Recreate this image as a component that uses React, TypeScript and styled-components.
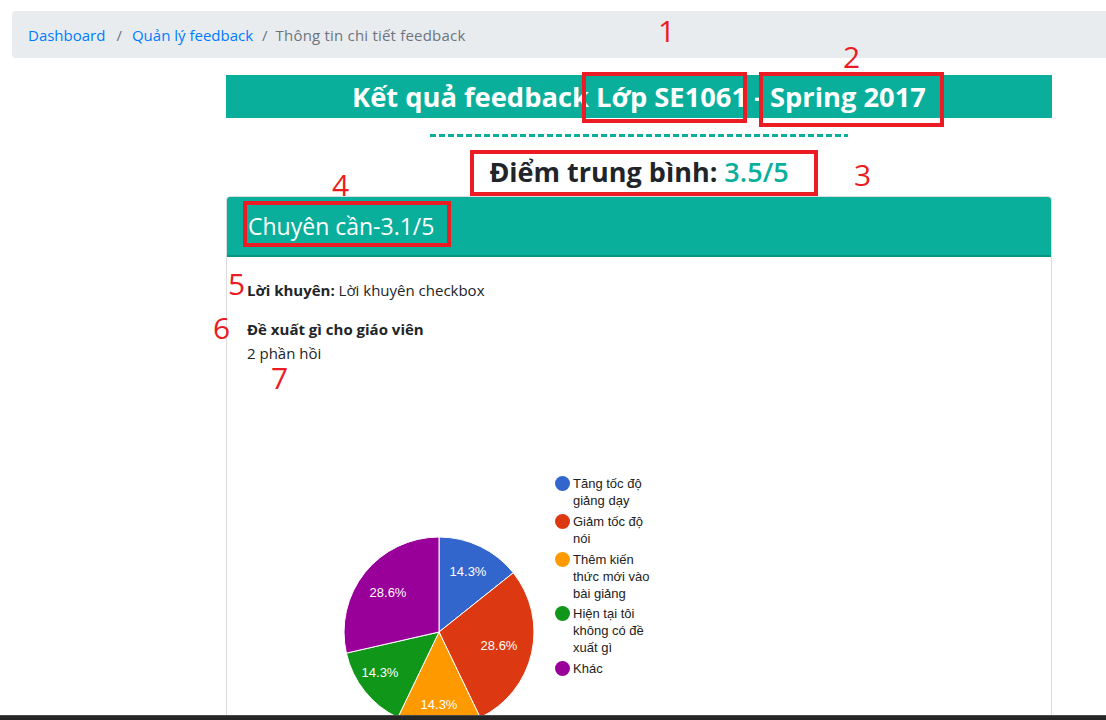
import React from "react";
import styled, { createGlobalStyle } from "styled-components";

const GlobalStyle = createGlobalStyle`
  html, body { margin: 0; padding: 0; background: #ffffff; overflow: hidden; }
  body { font-family: "Open Sans", "Noto Sans", sans-serif; color: #212529; }
  * { box-sizing: border-box; }
`;

const TEAL = "#0aaf9c";

const Page = styled.div`
  position: relative;
  width: 1106px;
  height: 720px;
  display: flex;
  flex-direction: column;
  overflow: hidden;
`;

const Main = styled.main`
  flex: 1;
  min-height: 0;
  overflow: hidden;
  padding: 11px 0 0 12px;
`;

const Breadcrumb = styled.nav`
  display: flex;
  align-items: center;
  width: calc(100% + 40px);
  height: 47px;
  padding: 0 16px;
  background: #e9ecef;
  border-radius: 4px;
  font-size: 15px;
`;

const Crumb = styled.span<{ $active?: boolean }>`
  color: ${(p) => (p.$active ? "#6c757d" : "#007bff")};
  letter-spacing: ${(p) => (p.$active ? "0.2px" : "0")};
`;

const Sep = styled.span<{ $wide?: boolean }>`
  color: #6c757d;
  padding: ${(p) => (p.$wide ? "0 10px 0 11px" : "0 8px 0 9px")};
`;

const Content = styled.section`
  width: 826px;
  margin: 17px 0 0 214px;
  display: flex;
  flex-direction: column;
`;

const TitleBar = styled.h3`
  margin: 0;
  height: 43px;
  line-height: 43px;
  background: ${TEAL};
  color: #ffffff;
  text-align: center;
  font-size: 27.3px;
  font-weight: 700;
  letter-spacing: 0;
`;

const DottedRule = styled.div`
  width: 418px;
  height: 3px;
  margin: 16px auto 0;
  background: repeating-linear-gradient(
    to right,
    ${TEAL} 0,
    ${TEAL} 6px,
    transparent 6px,
    transparent 9px
  );
`;

const Average = styled.h3`
  margin: 18px 0 7px;
  height: 34px;
  line-height: 34px;
  text-align: center;
  font-size: 27px;
  font-weight: 700;
  color: #212529;
  letter-spacing: 0;
`;

const AverageValue = styled.span`
  color: ${TEAL};
  font-weight: 600;
`;

const Card = styled.article`
  border: 1px solid #dcdcdc;
  border-radius: 4px 4px 0 0;
  overflow: hidden;
  height: 560px;
`;

const CardHeader = styled.header`
  height: 60px;
  display: flex;
  align-items: center;
  padding-left: 21px;
  background: ${TEAL};
  border-bottom: 2px solid #07957f;
  color: #ffffff;
  font-size: 23px;
  font-weight: 500;
`;

const CardBody = styled.div`
  padding: 21px 20px 0;
  font-size: 15px;
`;

const Line = styled.div<{ $gap?: number }>`
  line-height: 24px;
  margin-top: ${(p) => p.$gap ?? 0}px;
`;

const Strong = styled.strong`
  font-weight: 700;
`;

const ChartArea = styled.div`
  display: flex;
  align-items: flex-start;
  padding: 110px 0 0 92px;
`;

const PieSvg = styled.svg`
  display: block;
  margin-top: 57px;
  flex: none;
`;

const Legend = styled.ul`
  list-style: none;
  margin: 0 0 0 16px;
  padding: 0;
  display: flex;
  flex-direction: column;
  gap: 3.8px;
  font-family: "Liberation Sans", Arial, sans-serif;
  font-size: 13px;
  color: #222222;
`;

const LegendItem = styled.li`
  display: flex;
  align-items: flex-start;
  gap: 3px;
  line-height: 17px;
`;

const Dot = styled.span<{ $color: string }>`
  width: 15px;
  height: 15px;
  margin-top: 1px;
  border-radius: 50%;
  background: ${(p) => p.$color};
  flex: none;
`;

const LegendText = styled.span`
  display: flex;
  flex-direction: column;
`;

const BottomBar = styled.div`
  height: 5px;
  flex: none;
  background: #262626;
  border-top: 1px solid #4a4a4a;
`;

const Marks = styled.div`
  position: absolute;
  inset: 0;
  pointer-events: none;
`;

const RedBox = styled.div<{ $x: number; $y: number; $w: number; $h: number }>`
  position: absolute;
  left: ${(p) => p.$x}px;
  top: ${(p) => p.$y}px;
  width: ${(p) => p.$w}px;
  height: ${(p) => p.$h}px;
  border: 4px solid #ec1c24;
`;

const RedNum = styled.span<{ $x: number; $y: number }>`
  position: absolute;
  left: ${(p) => p.$x}px;
  top: ${(p) => p.$y}px;
  color: #ec1c24;
  font-family: "Open Sans", sans-serif;
  font-size: 30px;
  line-height: 30px;
  font-weight: 400;
`;

type Slice = { value: number; color: string; label: string; lx: number; ly: number };

const slices: Slice[] = [
  { value: 1, color: "#3366cc", label: "14.3%", lx: 129, ly: 39 },
  { value: 2, color: "#dc3912", label: "28.6%", lx: 160, ly: 113 },
  { value: 1, color: "#ff9900", label: "14.3%", lx: 100, ly: 172 },
  { value: 1, color: "#109618", label: "14.3%", lx: 41, ly: 140 },
  { value: 2, color: "#990099", label: "28.6%", lx: 49, ly: 60 },
];

const legend = [
  { color: "#3366cc", lines: ["Tăng tốc độ", "giảng dạy"] },
  { color: "#dc3912", lines: ["Giảm tốc độ", "nói"] },
  { color: "#ff9900", lines: ["Thêm kiến", "thức mới vào", "bài giảng"] },
  { color: "#109618", lines: ["Hiện tại tôi", "không có đề", "xuất gì"] },
  { color: "#990099", lines: ["Khác"] },
];

function PieChart() {
  const cx = 100;
  const cy = 100;
  const r = 95;
  const total = slices.reduce((s, x) => s + x.value, 0);
  let acc = 0;
  const pt = (a: number) => [cx + r * Math.sin(a), cy - r * Math.cos(a)];
  return (
    <PieSvg width="200" height="200" viewBox="0 0 200 200">
      {slices.map((s, i) => {
        const a0 = (acc / total) * Math.PI * 2;
        acc += s.value;
        const a1 = (acc / total) * Math.PI * 2;
        const [x0, y0] = pt(a0);
        const [x1, y1] = pt(a1);
        const large = a1 - a0 > Math.PI ? 1 : 0;
        return (
          <path
            key={i}
            d={`M${cx},${cy} L${x0},${y0} A${r},${r} 0 ${large} 1 ${x1},${y1} Z`}
            fill={s.color}
            stroke="#ffffff"
            strokeWidth="1"
          />
        );
      })}
      {slices.map((s, i) => (
        <text
          key={`t${i}`}
          x={s.lx}
          y={s.ly}
          textAnchor="middle"
          dominantBaseline="central"
          fill="#ffffff"
          fontFamily="Liberation Sans, Arial, sans-serif"
          fontSize="13"
        >
          {s.label}
        </text>
      ))}
    </PieSvg>
  );
}

export default function App() {
  return (
    <>
      <GlobalStyle />
      <Page>
        <Main>
          <Breadcrumb>
            <Crumb>Dashboard</Crumb>
            <Sep $wide>/</Sep>
            <Crumb>Quản lý feedback</Crumb>
            <Sep>/</Sep>
            <Crumb $active>Thông tin chi tiết feedback</Crumb>
          </Breadcrumb>
          <Content>
            <TitleBar>Kết quả feedback Lớp SE1061 - Spring 2017</TitleBar>
            <DottedRule />
            <Average>
              Điểm trung bình: <AverageValue>3.5/5</AverageValue>
            </Average>
            <Card>
              <CardHeader>Chuyên cần-3.1/5</CardHeader>
              <CardBody>
                <Line>
                  <Strong>Lời khuyên:</Strong> Lời khuyên checkbox
                </Line>
                <Line $gap={15}>
                  <Strong>Đề xuất gì cho giáo viên</Strong>
                </Line>
                <Line>2 phần hồi</Line>
                <ChartArea>
                  <PieChart />
                  <Legend>
                    {legend.map((l, i) => (
                      <LegendItem key={i}>
                        <Dot $color={l.color} />
                        <LegendText>
                          {l.lines.map((t, j) => (
                            <span key={j}>{t}</span>
                          ))}
                        </LegendText>
                      </LegendItem>
                    ))}
                  </Legend>
                </ChartArea>
              </CardBody>
            </Card>
          </Content>
        </Main>
        <BottomBar />
        <Marks>
          <RedBox $x={582} $y={72} $w={165} $h={51} />
          <RedBox $x={759} $y={72} $w={185} $h={55} />
          <RedBox $x={470} $y={150} $w={348} $h={46} />
          <RedBox $x={243} $y={201} $w={208} $h={46} />
          <RedNum $x={658} $y={16}>1</RedNum>
          <RedNum $x={843} $y={42}>2</RedNum>
          <RedNum $x={854} $y={160}>3</RedNum>
          <RedNum $x={332} $y={170}>4</RedNum>
          <RedNum $x={228} $y={269}>5</RedNum>
          <RedNum $x={213} $y={313}>6</RedNum>
          <RedNum $x={271} $y={363}>7</RedNum>
        </Marks>
      </Page>
    </>
  );
}
